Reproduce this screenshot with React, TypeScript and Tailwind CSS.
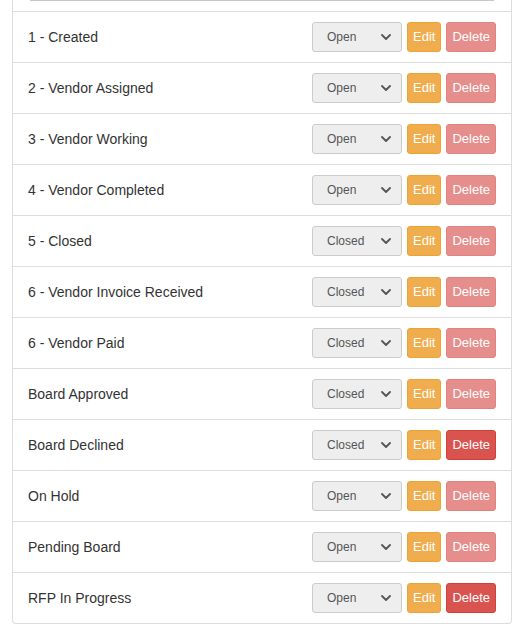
import React from "react";

const rows: { label: string; status: string; canDelete: boolean }[] = [
  { label: "1 - Created", status: "Open", canDelete: false },
  { label: "2 - Vendor Assigned", status: "Open", canDelete: false },
  { label: "3 - Vendor Working", status: "Open", canDelete: false },
  { label: "4 - Vendor Completed", status: "Open", canDelete: false },
  { label: "5 - Closed", status: "Closed", canDelete: false },
  { label: "6 - Vendor Invoice Received", status: "Closed", canDelete: false },
  { label: "6 - Vendor Paid", status: "Closed", canDelete: false },
  { label: "Board Approved", status: "Closed", canDelete: false },
  { label: "Board Declined", status: "Closed", canDelete: true },
  { label: "On Hold", status: "Open", canDelete: false },
  { label: "Pending Board", status: "Open", canDelete: false },
  { label: "RFP In Progress", status: "Open", canDelete: true },
];

function Chevron() {
  return (
    <svg width="10" height="6" viewBox="0 0 10 6" fill="none">
      <path d="M1 1 L5 5 L9 1" stroke="#555" strokeWidth="1.8" strokeLinecap="round" strokeLinejoin="round" />
    </svg>
  );
}

export default function App() {
  return (
    <div className="bg-white min-h-[633px] font-['Liberation_Sans',Arial,sans-serif]">
      <div className="ml-[12px] w-[500px] border-x border-b border-[#ddd] rounded-b-[4px]">
        <div className="px-[15px] pb-[10px]">
          <div className="mx-[2px] h-px bg-[#c8c8c8]" />
        </div>
        {rows.map((r) => (
          <div
            key={r.label}
            className="flex items-center justify-between border-t border-[#ddd] px-[15px] py-[10px]"
          >
            <span className="text-[14px] text-[#333] leading-[20px]">{r.label}</span>
            <div className="flex items-center gap-[5px]">
              <div className="flex h-[30px] w-[90px] items-center justify-between rounded-[3px] border border-[#ccc] bg-[#eee] pl-[14px] pr-[10px]">
                <span className="text-[12px] text-[#555]">{r.status}</span>
                <Chevron />
              </div>
              <button className="h-[30px] rounded-[3px] border border-[#eea236] bg-[#f0ad4e] px-[5px] text-[13px] text-white">
                Edit
              </button>
              <button
                className={
                  r.canDelete
                    ? "h-[30px] rounded-[3px] border border-[#d43f3a] bg-[#d9534f] px-[5px] text-[13px] text-white"
                    : "h-[30px] rounded-[3px] border border-[#d43f3a] bg-[#d9534f] px-[5px] text-[13px] text-white opacity-65"
                }
              >
                Delete
              </button>
            </div>
          </div>
        ))}
      </div>
    </div>
  );
}
